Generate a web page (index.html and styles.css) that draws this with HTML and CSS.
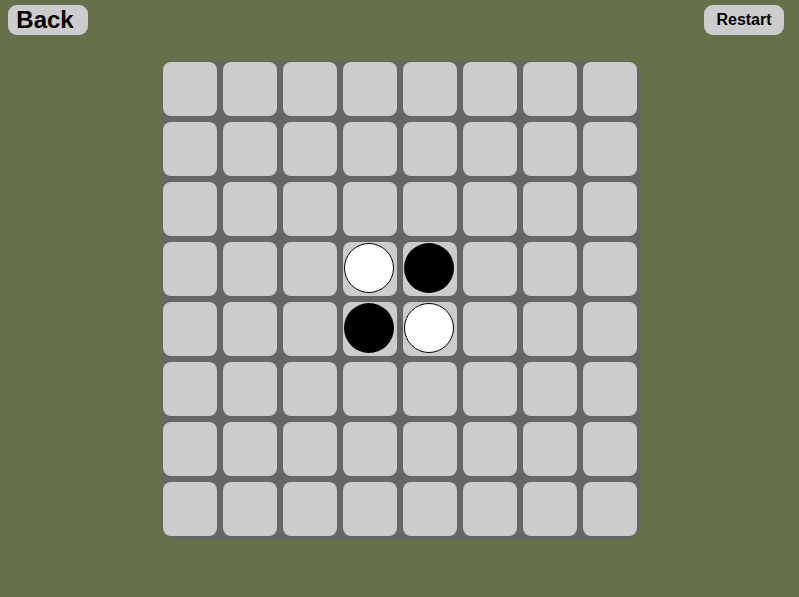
FILE: index.html
```html
<!DOCTYPE html>
<html>
<head>
<meta charset="utf-8">
<link rel="stylesheet" href="styles.css">
</head>
<body>
<div class="top">
  <button class="btn back">Back</button>
  <button class="btn restart">Restart</button>
</div>
<div class="main">
  <div class="board" id="board"></div>
</div>
<script>
  var b = document.getElementById('board');
  for (var r = 0; r < 8; r++) {
    for (var c = 0; c < 8; c++) {
      var cell = document.createElement('div');
      cell.className = 'cell';
      var p = null;
      if ((r === 3 && c === 3) || (r === 4 && c === 4)) p = 'white';
      if ((r === 3 && c === 4) || (r === 4 && c === 3)) p = 'black';
      if (p) {
        var d = document.createElement('div');
        d.className = 'piece ' + p;
        cell.appendChild(d);
      }
      b.appendChild(cell);
    }
  }
</script>
</body>
</html>
```
FILE: styles.css
```css
html, body {
  margin: 0;
  padding: 0;
  background: #66704a;
  width: 799px;
  height: 597px;
  overflow: hidden;
  font-family: "Liberation Sans", Arial, sans-serif;
}
.top {
  display: flex;
  justify-content: space-between;
  align-items: flex-start;
  padding: 5px 15px 0 8px;
  height: 30px;
}
.btn {
  width: 80px;
  height: 30px;
  border: none;
  border-radius: 9px;
  background: #cccccc;
  color: #000;
  font-family: "Liberation Sans", Arial, sans-serif;
  font-weight: bold;
  padding: 0;
  margin: 0;
}
.back {
  font-size: 24px;
  line-height: 30px;
  padding-right: 6px;
}
.restart {
  font-size: 16px;
  line-height: 28px;
}
.main {
  padding: 26px 0 0 162px;
}
.board {
  width: 478px;
  height: 478px;
  box-sizing: border-box;
  background: #666666;
  border-radius: 16px;
  padding: 1px 3px 3px 1px;
  display: grid;
  grid-template-columns: repeat(8, 54px);
  grid-template-rows: repeat(8, 54px);
  gap: 6px;
}
.cell {
  background: #cccccc;
  border-radius: 8px;
  position: relative;
}
.piece {
  width: 50px;
  height: 50px;
  box-sizing: border-box;
  border-radius: 50%;
  margin: 1px 0 0 1px;
}
.white {
  background: #ffffff;
  border: 1px solid #000;
}
.black {
  background: #000000;
}
```
